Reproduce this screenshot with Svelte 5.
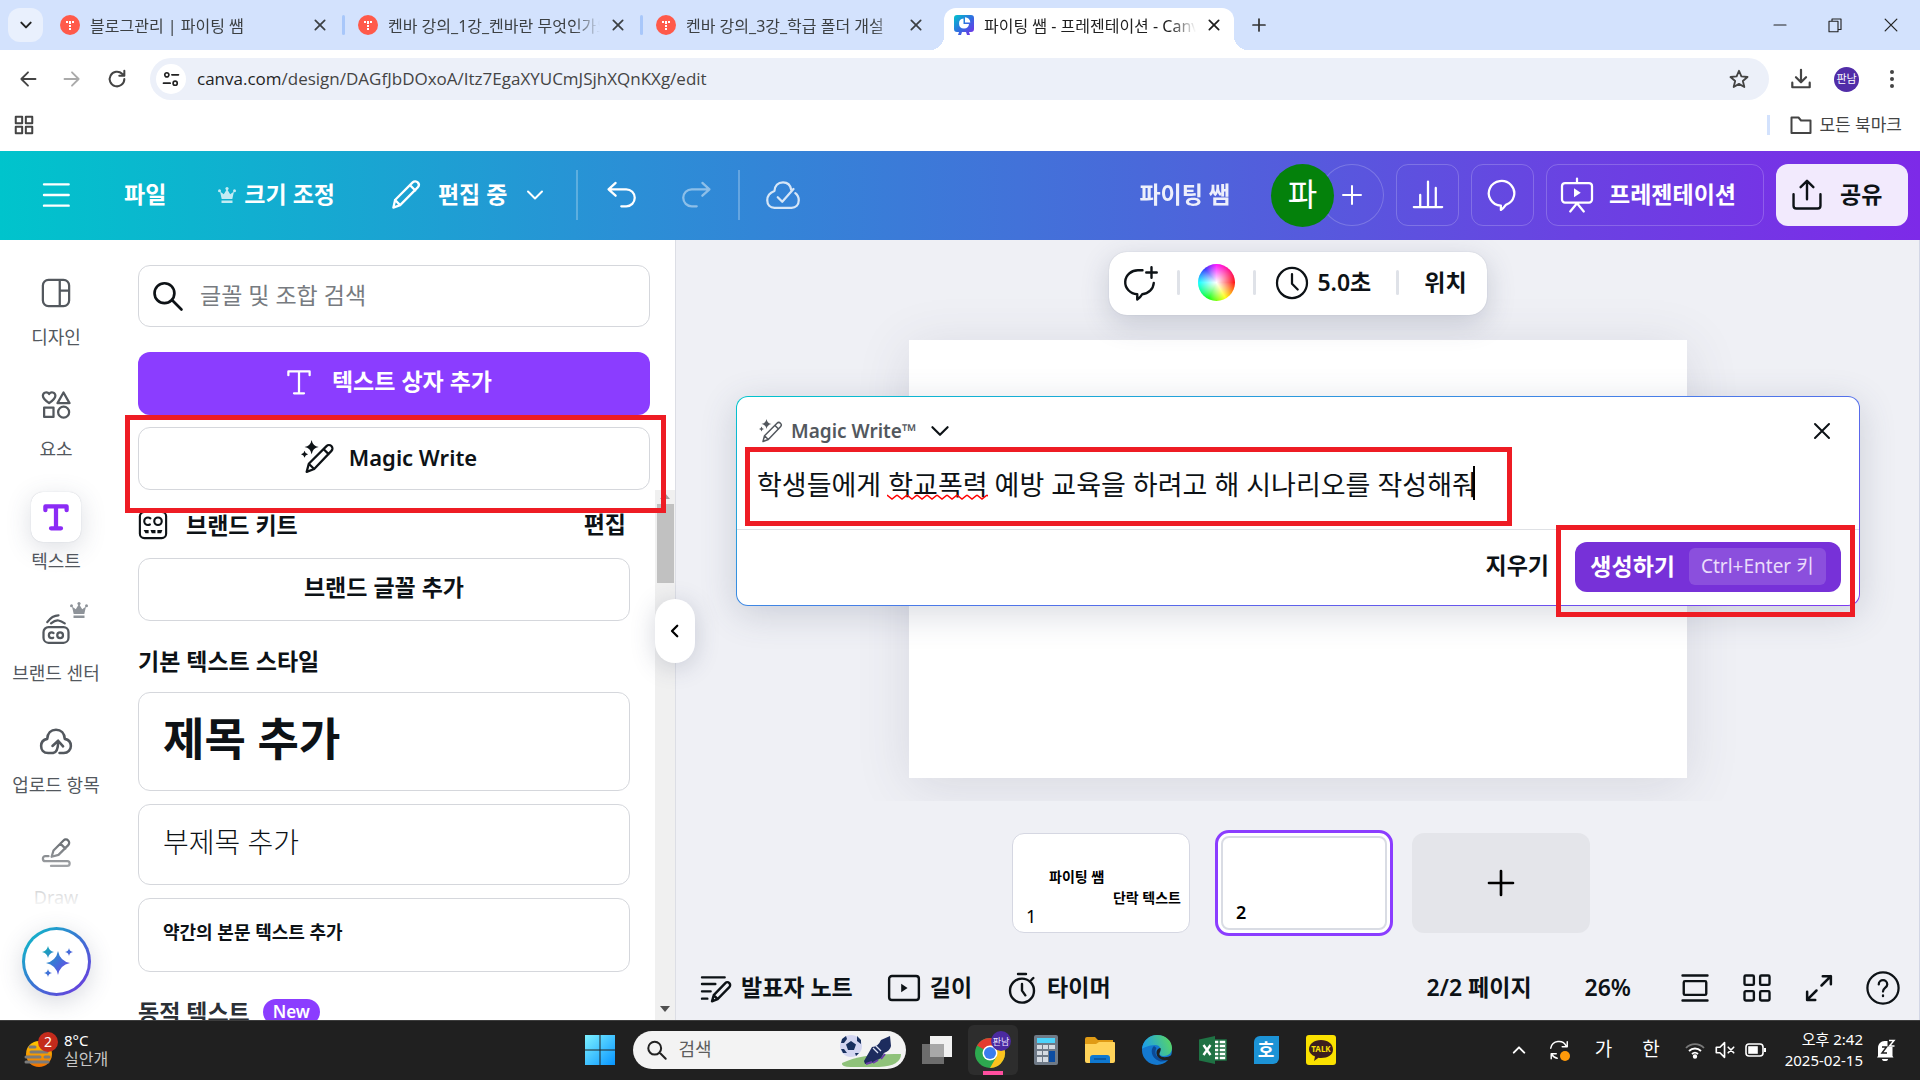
<script lang="ts">
  const tabs = [
    { title: '블로그관리 | 파이팅 쌤', active: false },
    { title: '켄바 강의_1강_켄바란 무엇인가요', active: false },
    { title: '켄바 강의_3강_학급 폴더 개설', active: false },
    { title: '파이팅 쌤 - 프레젠테이션 - Canva', active: true },
  ];

  const rail = [
    { icon: 'design', label: '디자인' },
    { icon: 'elements', label: '요소' },
    { icon: 'text', label: '텍스트', active: true },
    { icon: 'brand', label: '브랜드 센터', crown: true },
    { icon: 'upload', label: '업로드 항목' },
    { icon: 'draw', label: 'Draw' },
  ];

  // stroke icons, 24 x 24
  const paths: Record<string, string> = {
    menu: 'M3 4h18.5M3 12h18.5M3 20h18.5',
    down: 'M5 8.5l7 7 7-7',
    up: 'M5 15.5l7-7 7 7',
    left: 'M15 5l-7 7 7 7',
    close: 'M5 5l14 14M19 5L5 19',
    plus: 'M12 3v18M3 12h18',
    back: 'M21 12H4M12 4l-8 8 8 8',
    forward: 'M3 12h17M12 4l8 8-8 8',
    reload: 'M20 12a8 8 0 1 1-2.4-5.7L20 8.5M20 3v5.5h-5.5',
    site: 'M13 7h8M3 17h8M9.500 7a2.500 2.500 0 1 1-5 0a2.500 2.500 0 1 1 5 0M19.500 17a2.500 2.500 0 1 1-5 0a2.500 2.500 0 1 1 5 0',
    star: 'M12 3l2.600 6.200 6.700.6-5.100 4.400 1.600 6.600L12 17.300l-5.800 3.500 1.600-6.600-5.100-4.400 6.700-.6z',
    download: 'M12 2v13M6.500 10l5.500 5.500 5.500-5.500M2.500 16v5h19v-5',
    apps: 'M3 3h7v7H3zM14 3h7v7h-7zM3 14h7v7H3zM14 14h7v7h-7z',
    folder: 'M2.500 4.500h7l2.500 3h9.500v12.500h-19z',
    minimize: 'M4 12h16',
    restore: 'M4 7h12v14H4zM8 7V4h12v14h-4',
    pencil: 'M2.500 21.500l1.300-5.800L17 2.500c1.300-1.300 3-.8 3.800 0s1.300 2.400 0 3.800L7.600 19.600zM15 4.600l4 4M3.800 15.700l3.800 3.900',
    undo: 'M7.500 3.500L2.500 8l5 4.500M2.500 8H15a6 6 0 0 1 0 12h-3.500',
    redo: 'M16.500 3.500l5 4.500-5 4.500M21.500 8H9a6 6 0 0 0 0 12h3.500',
    cloud: 'M17.500 8.500C17 5.500 15 3.500 12 3.500c-3.500 0-5.500 2.500-5.700 5.800C3.500 10.300 1.500 12.500 1.500 15.500c0 3 2 5 4.800 5h11.400c2.800 0 4.800-2 4.800-5 0-2-1-3.700-2.300-4.700M8.500 13.500l3 3 7.500-8.500',
    chart: 'M2 20.500h20M6.500 20V12M12 20V2.500M17.500 20V7',
    comment: 'M10.500 19.500A9 8.700 0 1 1 14 19c-1 1.500-2 2.700-3.500 3.500z',
    present: 'M12 1v3M4 4h16a2 2 0 0 1 2 2v9a2 2 0 0 1-2 2H4a2 2 0 0 1-2-2V6a2 2 0 0 1 2-2zM12 17.500L7.500 23M12 17.500l4.500 5.500',
    share: 'M12 15V2M7.500 6.500L12 2l4.500 4.500M2.500 11.500v8a2 2 0 0 0 2 2h15a2 2 0 0 0 2-2v-8',
    search: 'M16.500 10a7 7 0 1 1-14 0a7 7 0 1 1 14 0M15 15l6.500 6.500',
    design: 'M6 1.500h12A4.500 4.500 0 0 1 22.500 6v12a4.500 4.500 0 0 1-4.500 4.500H6A4.500 4.500 0 0 1 1.500 18V6A4.500 4.500 0 0 1 6 1.500zM15 2v20M15 10h7',
    elements: 'M6.500 10.500C3 8 1.500 6.500 1.500 4.500a2.700 2.700 0 0 1 5-1.300 2.700 2.700 0 0 1 5 1.300c0 2-1.500 3.500-5 6zM18 2l4.800 8.500h-9.600zM2.500 14H10v7.500H2.500zM22.500 17.700a4.400 4.400 0 1 1-8.800 0a4.400 4.400 0 1 1 8.800 0',
    text: 'M3.500 6.500V3.500h17v3M12 3.500v17.500M8 21h8',
    upload: 'M9.500 20.500H6.500C3 20.500 1.500 18 1.500 15.500c0-2.600 1.800-4.500 4.300-5C6 6.500 8.500 4 12 4s6 2.500 6.200 6.500c2.500.5 4.300 2.400 4.300 5 0 2.700-2 5-5 5h-3M10 20.500c2.500-.5 3.500-3 3.500-8M9.500 15.500l4-3.700 3.500 4',
    draw: 'M8.500 15l1.500-5 8-8a2.600 2.600 0 0 1 3.800 3.700L14 13.500zM15.500 4.500l4 4M6 14.500H3.500a2 2 0 0 0 0 4H21M8 22.300h13a1.900 1.900 0 0 0 0-3.800',
    brand: 'M6 10.500h12a4 4 0 0 1 4 4V19a4 4 0 0 1-4 4H6a4 4 0 0 1-4-4v-4.500a4 4 0 0 1 4-4zM8 7.500c2.500-2 5-2.500 6-2.300s3 1 5 2.300M5 6.500c2.500-3.500 6-5.500 9-5.500',
    kit: 'M5 1.500h14A3.500 3.500 0 0 1 22.500 5v14a3.500 3.500 0 0 1-3.500 3.500H5A3.500 3.500 0 0 1 1.500 19V5A3.500 3.500 0 0 1 5 1.500z',
    magic: 'M4 22.500l1.500-5.700L18 4.300a2.400 2.400 0 0 1 3.500 3.400L9.300 20.500zM16 6.500l3.500 3.500M5.500 16.800l3.800 3.700',
    addComment: 'M13 3.500h-2.500a8.500 8 0 0 0-1 16v3.500c1.500-1 2.500-2 3.300-3.500A8.300 8 0 0 0 20.500 12M19 1.500v7M15.500 5h7',
    clock: 'M22 12a10 10 0 1 1-20 0a10 10 0 1 1 20 0M12 6v6.500l3.800 3.800',
    notes: 'M1.500 4h17M1.500 9h10M1.500 14.500h6.500M1.500 20h4M9 22l1.300-4.700 8.700-9a2 2 0 0 1 3 3l-8.800 9zM10.300 17.300l2.900 3',
    duration: 'M3.500 3.500h17a2 2 0 0 1 2 2v13a2 2 0 0 1-2 2h-17a2 2 0 0 1-2-2v-13a2 2 0 0 1 2-2z',
    timer: 'M21 14a9 9 0 1 1-18 0a9 9 0 1 1 18 0M9 1.500h6M12 9v5l2.500 3.500M19 6l1.500-1.500',
    scrollView: 'M2 2h20M2 22h20M4 6.500h16a1 1 0 0 1 1 1v9a1 1 0 0 1-1 1H4a1 1 0 0 1-1-1v-9a1 1 0 0 1 1-1z',
    gridView: 'M3 2h5.500a1 1 0 0 1 1 1v5.500a1 1 0 0 1-1 1H3a1 1 0 0 1-1-1V3a1 1 0 0 1 1-1zM15.500 2H21a1 1 0 0 1 1 1v5.500a1 1 0 0 1-1 1h-5.500a1 1 0 0 1-1-1V3a1 1 0 0 1 1-1zM3 14.500h5.500a1 1 0 0 1 1 1V21a1 1 0 0 1-1 1H3a1 1 0 0 1-1-1v-5.500a1 1 0 0 1 1-1zM15.500 14.500H21a1 1 0 0 1 1 1V21a1 1 0 0 1-1 1h-5.500a1 1 0 0 1-1-1v-5.500a1 1 0 0 1 1-1z',
    expand: 'M14 10l7.500-7.500M15 2.500h6.500V9M10 14l-7.500 7.500M2.500 15v6.500H9',
    help: 'M23 12a11 11 0 1 1-22 0a11 11 0 1 1 22 0M9 9.500c0-4 6-4 6 0 0 2.300-3 2.200-3 5M12 17.200v.6',
    sync: 'M3 10a9 9 0 0 1 17-2M21 3v5.500h-5.500M10 21a9 9 0 0 1-6-4.500M3.500 21.500V16H9',
    mute: 'M2.500 9h4l5-5v16l-5-5h-4zM15.500 9l6 6M21.500 9l-6 6',
  };

  const sparkle = 'M0-10Q1.500-1.500 10 0Q1.500 1.500 0 10Q-1.500 1.500-10 0Q-1.500-1.500 0-10z';

  let search = $state('');
  let prompt = $state('학생들에게 학교폭력 예방 교육을 하려고 해 시나리오를 작성해줘');
</script>

{#snippet icon(name: string, size: number, weight: number = 1.5)}
  <svg class="icon" width={size} height={size} viewBox="0 0 24 24" stroke-width={weight} aria-hidden="true">
    <path d={paths[name]} />
    {#if name === 'magic'}
      <path class="solid" d={sparkle} transform="translate(7.500 5) scale(.5)" />
      <path class="solid" d={sparkle} transform="translate(2.500 10) scale(.25)" />
    {:else if name === 'present'}
      <path class="solid" d="M10 7.500v6l4.500-3z" />
    {:else if name === 'duration'}
      <path class="solid" d="M10 9v6l4.500-3z" />
    {:else if name === 'brand'}
      <circle cx="8.600" cy="17" r="2.300" stroke-dasharray="9.800 4.600" stroke-dashoffset="-2.300" />
      <circle cx="15.300" cy="17" r="2.300" />
    {:else if name === 'kit'}
      <circle cx="8" cy="9" r="3" stroke-dasharray="12.800 6" stroke-dashoffset="-3" />
      <circle cx="16" cy="9" r="3" />
      <path class="solid" d="M4.500 16h4v2.500H6zM10 16h4v2.500h-3zM15.500 16h4l-1 2.500h-3z" />
    {/if}
  </svg>
{/snippet}

{#snippet crown()}
  <svg class="crown" width="18" height="16" viewBox="0 0 18 16" aria-hidden="true">
    <path d="M2 4.500l3.800 2.700L9 2l3.200 5.200L16 4.500 14.300 12H3.700zM3.500 13.500h11V16h-11z" />
    <circle cx="1.500" cy="3.800" r="1.500" /><circle cx="9" cy="1.600" r="1.600" /><circle cx="16.500" cy="3.800" r="1.500" />
  </svg>
{/snippet}

<div class="window">
  <header class="tabstrip">
    <button class="tab-search" aria-label="탭 검색">{@render icon('down', 16, 3)}</button>
    <div class="tabs">
      {#each tabs as tab (tab.title)}
        <div class="tab" class:active={tab.active}>
          {#if tab.active}
            <svg width="20" height="24" viewBox="0 0 20 24" aria-hidden="true">
              <defs>
                <linearGradient id="fav" x1="0" y1="0" x2="1" y2="1">
                  <stop offset="0" stop-color="#00c4cc" /><stop offset=".5" stop-color="#2f6fe0" /><stop offset="1" stop-color="#7d2ae8" />
                </linearGradient>
              </defs>
              <path fill="url(#fav)" d="M3 2h14a3 3 0 0 1 3 3v11a3 3 0 0 1-3 3h-2l1 3h-3l-1-3H8l-1 3H4l1-3H3a3 3 0 0 1-3-3V5a3 3 0 0 1 3-3z" />
              <path fill="#fff" d="M9.500 5.500a5 5 0 1 0 5.500 5.500h-5.500zM11 4.200v5.300h5.300A5.300 5.300 0 0 0 11 4.200z" />
            </svg>
          {:else}
            <svg width="20" height="20" viewBox="0 0 20 20" aria-hidden="true">
              <circle cx="10" cy="10" r="10" fill="#ff5a4a" />
              <path d="M6 7h8M10 7v8" stroke="#fff" stroke-width="2" stroke-dasharray="2 1" fill="none" />
            </svg>
          {/if}
          <span class="tab-title">{tab.title}</span>
          <button aria-label="탭 닫기">{@render icon('close', 16, 2.6)}</button>
        </div>
      {/each}
    </div>
    <button class="new-tab" aria-label="새 탭">{@render icon('plus', 16, 2.6)}</button>
    <div class="window-controls">
      <button aria-label="최소화">{@render icon('minimize', 18, 1.5)}</button>
      <button aria-label="이전 크기로 복원">{@render icon('restore', 18, 1.5)}</button>
      <button aria-label="닫기">{@render icon('close', 20, 1.5)}</button>
    </div>
  </header>

  <div class="chrome-bar">
    <div class="address-row">
      <div class="nav-buttons">
        <button aria-label="뒤로">{@render icon('back', 20, 2.2)}</button>
        <button class="dim" aria-label="앞으로">{@render icon('forward', 20, 2.2)}</button>
        <button aria-label="새로고침">{@render icon('reload', 22, 2.2)}</button>
      </div>
      <div class="omnibox">
        <button class="site-info" aria-label="사이트 정보">{@render icon('site', 20, 2)}</button>
        <span class="url"><b>canva.com</b>/design/DAGfJbDOxoA/Itz7EgaXYUCmJSjhXQnKXg/edit</span>
        <button aria-label="북마크">{@render icon('star', 22, 2)}</button>
      </div>
      <div class="chrome-actions">
        <button aria-label="다운로드">{@render icon('download', 22, 2.4)}</button>
        <button class="profile">판남</button>
        <button aria-label="메뉴">
          <svg width="6" height="22" viewBox="0 0 6 22" fill="#444"><circle cx="3" cy="4" r="2" /><circle cx="3" cy="11" r="2" /><circle cx="3" cy="18" r="2" /></svg>
        </button>
      </div>
    </div>
    <div class="bookmarks">
      <button aria-label="앱">{@render icon('apps', 22, 2.2)}</button>
      <button class="all-bookmarks">{@render icon('folder', 24, 2)}모든 북마크</button>
    </div>
  </div>

  <header class="canva-header">
    <div class="header-left">
      <button aria-label="메뉴">{@render icon('menu', 32, 1.8)}</button>
      <button>파일</button>
      <button class="resize">{@render crown()}크기 조정</button>
      <button class="editing">{@render icon('pencil', 32, 1.7)}편집 중{@render icon('down', 24, 2)}</button>
      <span class="rule"></span>
      <button class="undo" aria-label="실행 취소">{@render icon('undo', 34, 1.6)}</button>
      <button class="redo" aria-label="다시 실행">{@render icon('redo', 34, 1.6)}</button>
      <span class="rule"></span>
      <button class="saved" aria-label="저장됨">{@render icon('cloud', 36, 1.5)}</button>
    </div>
    <div class="header-right">
      <span class="doc-name">파이팅 쌤</span>
      <div class="people">
        <span class="avatar">파</span>
        <button class="add-person" aria-label="멤버 추가">{@render icon('plus', 24, 2)}</button>
      </div>
      <button class="square" aria-label="분석">{@render icon('chart', 34, 1.6)}</button>
      <button class="square" aria-label="댓글">{@render icon('comment', 34, 1.6)}</button>
      <button class="square present">{@render icon('present', 36, 1.5)}프레젠테이션</button>
      <button class="share">{@render icon('share', 34, 1.7)}공유</button>
    </div>
  </header>

  <main>
    <nav class="rail">
      {#each rail as item (item.label)}
        <a href="#{item.icon}" class:active={item.active}>
          <span class="rail-icon">
            {@render icon(item.icon, item.icon === 'upload' ? 34 : 30, item.active ? 3.4 : 1.8)}
            {#if item.crown}<span class="rail-crown">{@render crown()}</span>{/if}
          </span>
          <span class="rail-label">{item.label}</span>
        </a>
      {/each}
      <div class="rail-fade"></div>
      <button class="assistant" aria-label="Canva 어시스턴트">
        <svg width="36" height="36" viewBox="-18 -18 36 36" fill="url(#spark)" aria-hidden="true">
          <defs>
            <linearGradient id="spark" gradientUnits="userSpaceOnUse" x1="-14" y1="-12" x2="14" y2="12">
              <stop offset="0" stop-color="#16a8b8" /><stop offset=".5" stop-color="#3f73d8" /><stop offset="1" stop-color="#7a3be8" />
            </linearGradient>
          </defs>
          <path d="M1-11Q3-1 13 1Q3 3 1 13Q-1 3-11 1Q-1-1 1-11z" />
          <path d="M-9-16Q-8-11-3-10Q-8-9-9-4Q-10-9-15-10Q-10-11-9-16z" />
          <path d="M12-14Q12.500-10.500 16-10Q12.500-9.500 12-6Q11.500-9.500 8-10Q11.500-10.500 12-14z" />
          <path d="M-9 7Q-8.500 10.500-5 11Q-8.500 11.500-9 15Q-9.500 11.500-13 11Q-9.500 10.500-9 7z" />
        </svg>
      </button>
    </nav>

    <aside class="panel">
      <div class="panel-top">
        <label class="search">
          {@render icon('search', 34, 1.9)}
          <input type="search" placeholder="글꼴 및 조합 검색" aria-label="글꼴 및 조합 검색" bind:value={search} />
        </label>
        <button class="add-text">{@render icon('text', 30, 1.8)}텍스트 상자 추가</button>
        <div class="marked magic-entry">
          <button class="outlined">{@render icon('magic', 34, 1.6)}Magic Write</button>
          <span class="mark"></span>
        </div>
      </div>
      <div class="panel-scroll">
        <div class="list">
          <div class="brand-row">
            {@render icon('kit', 30, 1.7)}
            <h2>브랜드 키트</h2>
            <button>편집</button>
          </div>
          <button class="outlined">브랜드 글꼴 추가</button>
          <h2 class="section">기본 텍스트 스타일</h2>
          <button class="style title">제목 추가</button>
          <button class="style subtitle">부제목 추가</button>
          <button class="style body">약간의 본문 텍스트 추가</button>
          <h2 class="section dynamic">동적 텍스트 <span class="new">New</span></h2>
        </div>
        <div class="scrollbar" aria-hidden="true">
          <svg width="10" height="6" viewBox="0 0 10 6"><path d="M0 6l5-6 5 6z" fill="#a0a0a0" /></svg>
          <span class="thumb"></span>
          <svg width="10" height="6" viewBox="0 0 10 6"><path d="M0 0l5 6 5-6z" fill="#505050" /></svg>
        </div>
      </div>
      <button class="collapse" aria-label="패널 숨기기">{@render icon('left', 18, 3)}</button>
    </aside>

    <section class="editor">
      <div class="stage">
        <div class="toolbar">
          <button aria-label="댓글 추가">{@render icon('addComment', 36, 1.6)}</button>
          <span class="sep"></span>
          <button class="wheel" aria-label="배경 색상"></button>
          <span class="sep"></span>
          <button class="timing">{@render icon('clock', 36, 1.5)}5.0초</button>
          <span class="sep"></span>
          <button class="position">위치</button>
        </div>
        <div class="page"></div>
      </div>

      <div class="thumbs">
        <button class="slide first" aria-label="1페이지">
          <span class="slide-text one">파이팅 쌤</span>
          <span class="slide-text two">단락 텍스트</span>
          <span class="num">1</span>
        </button>
        <button class="slide selected" aria-label="2페이지"><span class="num">2</span></button>
        <button class="add-slide" aria-label="페이지 추가">{@render icon('plus', 32, 2)}</button>
      </div>

      <footer class="status">
        <button>{@render icon('notes', 32, 1.8)}발표자 노트</button>
        <button>{@render icon('duration', 34, 1.7)}길이</button>
        <button>{@render icon('timer', 32, 1.8)}타이머</button>
        <span class="page-count">2/2 페이지</span>
        <button class="zoom">26%</button>
        <div class="view-buttons">
          <button aria-label="스크롤 보기">{@render icon('scrollView', 30, 1.9)}</button>
          <button aria-label="그리드 보기">{@render icon('gridView', 30, 1.9)}</button>
          <button aria-label="전체 화면">{@render icon('expand', 30, 2)}</button>
          <button aria-label="도움말">{@render icon('help', 34, 1.6)}</button>
        </div>
      </footer>

      <form class="magic-write" onsubmit={(e) => e.preventDefault()}>
        <div class="mw-head">
          {@render icon('magic', 24, 1.5)}
          <label for="prompt">Magic Write™</label>
          <button type="button" aria-label="옵션">{@render icon('down', 26, 2)}</button>
          <button type="button" class="mw-close" aria-label="닫기">{@render icon('close', 24, 2)}</button>
        </div>
        <div class="mw-prompt">
          <input id="prompt" type="text" spellcheck="false" bind:value={prompt} />
          <svg class="squiggle" width="101" height="6" aria-hidden="true">
            <defs>
              <pattern id="wave" width="10" height="6" patternUnits="userSpaceOnUse">
                <path d="M0 1L5 5L10 1" fill="none" stroke="#f00" stroke-width="1.400" />
              </pattern>
            </defs>
            <rect width="101" height="6" fill="url(#wave)" />
          </svg>
          <span class="caret"></span>
          <span class="mark"></span>
        </div>
        <div class="mw-foot">
          <button type="button" class="clear">지우기</button>
          <div class="marked submit">
            <button class="generate">생성하기<kbd>Ctrl+Enter 키</kbd></button>
            <span class="mark"></span>
          </div>
        </div>
      </form>
    </section>
  </main>

  <footer class="taskbar">
    <button class="weather">
      <svg width="36" height="36" viewBox="0 0 36 36" aria-hidden="true">
        <defs>
          <linearGradient id="sun" x1="0" y1="0" x2="0" y2="1"><stop offset="0" stop-color="#ffc800" /><stop offset="1" stop-color="#f07000" /></linearGradient>
        </defs>
        <circle cx="15" cy="22" r="13" fill="url(#sun)" />
        <path d="M6 15h5M7 20h16M2 25h14M21 25h4M2 30h22" stroke="#7b7b7b" stroke-width="3" stroke-linecap="round" />
        <circle cx="24" cy="10" r="10" fill="#c42b1c" />
        <text x="24" y="15" fill="#fff" font-size="14" text-anchor="middle">2</text>
      </svg>
      <span>8°C<br /><small>실안개</small></span>
    </button>

    <div class="apps">
      <button aria-label="시작">
        <svg width="30" height="30" viewBox="0 0 30 30">
          <defs>
            <linearGradient id="win" gradientUnits="userSpaceOnUse" x1="0" y1="0" x2="30" y2="30"><stop offset="0" stop-color="#7df1ff" /><stop offset="1" stop-color="#0795ff" /></linearGradient>
          </defs>
          <path fill="url(#win)" d="M0 0h14.500v14.500H0zM15.500 0H30v14.500H15.500zM0 15.500h14.500V30H0zM15.500 15.500H30V30H15.500z" />
        </svg>
      </button>
      <label class="task-search">
        {@render icon('search', 22, 2.2)}
        <input type="text" placeholder="검색" aria-label="검색" />
        <svg width="64" height="34" viewBox="0 0 64 34" aria-hidden="true">
          <path d="M3 30Q24 20 62 21Q62 33 40 34H12Q2 34 3 30z" fill="#8fc27a" />
          <circle cx="12" cy="13" r="11" fill="#d3d6f1" />
          <path d="M12 8l5 3.500-2 5.500H9l-2-5.500zM3 6l4-3 1 3-3 4-3 0zM18 3l4 4v4l-4-3zM4 20l-2-4 3 0 3 4zM16 20h4l-3 3z" fill="#18305f" />
          <path d="M51 3l1 10q-1 5-7 7l-3 5-9 5-7 1-1-3 8-14q6 0 9-7z" fill="#1d2c5e" />
          <path d="M36 12l6 6M34 15l5 5" stroke="#dfe4f5" stroke-width="1.300" />
          <path d="M27 31l6-2M34 30l5-3M42 26l4-5" stroke="#6a3fa8" stroke-width="2" />
        </svg>
      </label>
      <button aria-label="작업 보기">
        <svg width="30" height="32" viewBox="0 0 30 32"><path fill="#6d6d6d" d="M0 10h22v20H0z" /><path fill="#f1f1f1" d="M8 2h22v21H8z" /><path fill="#a8a8a8" d="M8 10h14v13H8z" /></svg>
      </button>
      <button class="running" aria-label="Chrome">
        <svg width="38" height="40" viewBox="0 0 38 40">
          <circle cx="16" cy="23" r="15" fill="#2da94f" />
          <path d="M16 23L3 15.500A15 15 0 0 1 29 15.500z" fill="#e33b2e" />
          <path d="M16 15.500h13A15 15 0 0 1 16 38l6.500-11.300z" fill="#fcc31e" />
          <circle cx="16" cy="23" r="7.500" fill="#fff" /><circle cx="16" cy="23" r="6" fill="#3b7ded" />
          <circle cx="27" cy="11" r="10" fill="#4b2aa0" />
          <text x="27" y="15" fill="#e8e2ff" font-size="9" text-anchor="middle">판남</text>
        </svg>
      </button>
      <button aria-label="계산기">
        <svg width="24" height="30" viewBox="0 0 24 30">
          <rect width="24" height="30" rx="2" fill="#6f7a87" /><path fill="#4cd3fb" d="M3 3h18v5H3z" />
          <path fill="#d5dbe2" d="M3 10h5v4H3zM9 10h5v4H9zM15 10h6v4h-6zM3 16h5v4H3zM9 16h5v4H9zM3 22h5v5H3zM9 22h5v5H9z" /><path fill="#0c4da2" d="M15 16h6v11h-6z" />
        </svg>
      </button>
      <button aria-label="파일 탐색기">
        <svg width="30" height="28" viewBox="0 0 30 28">
          <path fill="#e09b15" d="M0 3a2 2 0 0 1 2-2h8l3 3h15v8H0z" /><path fill="#ffd35a" d="M0 8l11 0 3-2h15a1 1 0 0 1 1 1v18a2 2 0 0 1-2 2H2a2 2 0 0 1-2-2z" />
          <path fill="#0f78d0" d="M5 27v-5a3 3 0 0 1 3-3h14a3 3 0 0 1 3 3v5z" /><path stroke="#0a4f94" stroke-width="1.500" d="M9 23h12" />
        </svg>
      </button>
      <button aria-label="Edge">
        <svg width="30" height="30" viewBox="0 0 30 30">
          <defs>
            <linearGradient id="edge" x1="0" y1=".3" x2="1" y2="0"><stop offset="0" stop-color="#1d9fe8" /><stop offset="1" stop-color="#5fdc57" /></linearGradient>
          </defs>
          <circle cx="15" cy="15" r="15" fill="#1479d0" />
          <path fill="url(#edge)" d="M0 14C1 5 8 0 15 0c9 0 15 6 15 13 0 5-4 8-8 8-4 0-5-2-4-4s1-7-5-7C7 10 1 13 0 14z" />
          <path fill="#0c4a96" d="M12 11c-4 3-3 12 5 15 4 1.500 8-.5 10-3C22 26 14 23 13.500 18c-.3-3 1-5 1-5z" />
          <path fill="#202020" d="M18.500 13c1 3-2 5-1 7 2 3 8 3 12 0l.5 4-3 1C20 26 14 23 14.500 17c.2-2 2-4 4-4z" />
        </svg>
      </button>
      <button aria-label="Excel">
        <svg width="28" height="28" viewBox="0 0 28 28">
          <path fill="#fff" stroke="#1f7244" stroke-width="1.500" d="M15 4h12v20H15z" /><path stroke="#1f7244" stroke-width="1.500" d="M16 8h10M16 12h10M16 16h10M16 20h10M20 4v20" />
          <path fill="#1f7244" d="M0 3.500L16 0v28L0 24.500z" /><path d="M4.500 9l7 10M11.500 9l-7 10" stroke="#fff" stroke-width="2.400" />
        </svg>
      </button>
      <button aria-label="한글">
        <svg width="25" height="28" viewBox="0 0 25 28">
          <path fill="#1c93d6" d="M6 0h19v22a6 6 0 0 1-6 6H0V6a6 6 0 0 1 6-6z" /><text x="12" y="21" fill="#fff" font-size="18" font-weight="700" text-anchor="middle">호</text>
        </svg>
      </button>
      <button aria-label="카카오톡">
        <svg width="30" height="30" viewBox="0 0 30 30">
          <rect width="30" height="30" rx="3" fill="#fae100" /><path fill="#3c1e1e" d="M15 5c7 0 12 4 12 9.500S22 23 15 23c-1 0-2 0-2.500-.2L8 26l1-4.500C5.500 20 3 17.500 3 14.500 3 9 8 5 15 5z" />
          <text x="15" y="17" fill="#fae100" font-size="8" font-weight="700" text-anchor="middle">TALK</text>
        </svg>
      </button>
    </div>

    <div class="tray">
      <button aria-label="숨겨진 아이콘">{@render icon('up', 18, 2.6)}</button>
      <button class="sync" aria-label="업데이트">{@render icon('sync', 22, 1.6)}<span class="dot"></span></button>
      <button class="ime">가</button>
      <button class="ime">한</button>
      <button class="quick" aria-label="네트워크, 소리, 배터리">
        <svg width="20" height="18" viewBox="0 0 20 18" fill="none" stroke="#fff" stroke-width="1.800">
          <path d="M1 7a12.500 12.500 0 0 1 18 0" opacity=".4" /><path d="M4 10a8.500 8.500 0 0 1 12 0M7 13a4.500 4.500 0 0 1 6 0" /><circle cx="10" cy="15.500" r="1.300" fill="#fff" />
        </svg>
        {@render icon('mute', 22, 1.8)}
        <svg width="22" height="16" viewBox="0 0 22 16" fill="none" stroke="#fff" stroke-width="1.600">
          <rect x="1" y="2" width="17" height="12" rx="3" /><rect x="4" y="5" width="8" height="6" fill="#fff" /><path d="M20 6v4" stroke-width="2" />
        </svg>
      </button>
      <button class="clock">오후 2:42<br />2025-02-15</button>
      <svg width="20" height="22" viewBox="0 0 20 22" aria-label="알림">
        <path fill="#fff" d="M2 17V9c0-4 3-7 6.500-7h3v5h5v10l1 1.500H1zM6 20h6a3 2 0 0 1-6 0z" />
        <path d="M6 8h4.500L6 14h5M12.500 1.500h5L13 7h5" fill="none" stroke="#202020" stroke-width="1.500" /><path d="M13 1.500h5L13.500 7h5" fill="none" stroke="#fff" stroke-width="1.500" />
      </svg>
    </div>
  </footer>
</div>

<style>
  :global(body) {
    overflow: hidden;
  }

  .window {
    display: flex;
    flex-direction: column;
    height: 100vh;
    font-family: 'Noto Sans', 'Noto Sans CJK KR', sans-serif;
    line-height: 1.3;
    color: #0d1216;
    background: #fff;
  }

  .window * {
    box-sizing: border-box;
  }

  button {
    display: flex;
    align-items: center;
    justify-content: center;
    flex: none;
    padding: 0;
    border: 0;
    background: none;
    color: inherit;
    font: inherit;
    white-space: nowrap;
    cursor: pointer;
  }

  svg {
    display: block;
    flex: none;
  }

  input {
    min-width: 0;
    flex: 1;
    padding: 0;
    border: 0;
    outline: 0;
    background: none;
    color: inherit;
    font: inherit;
  }

  h2 {
    margin: 0;
    font-size: 23px;
    font-weight: 600;
    line-height: 30px;
  }

  .icon {
    fill: none;
    stroke: currentColor;
    stroke-linecap: round;
    stroke-linejoin: round;
  }

  .icon .solid {
    fill: currentColor;
    stroke: none;
  }

  .crown {
    fill: currentColor;
  }

  .marked {
    position: relative;
  }

  .mark {
    position: absolute;
    border: 5px solid #ee1c24;
    pointer-events: none;
    z-index: 5;
  }

  /* browser */
  .tabstrip {
    display: flex;
    align-items: flex-end;
    height: 50px;
    flex: none;
    padding-left: 8px;
    background: #d3e2fd;
    color: #222;
    font-size: 16px;
  }

  .tab-search {
    align-self: center;
    width: 35px;
    height: 34px;
    margin-right: 7px;
    border-radius: 12px;
    background: #e9f0fd;
  }

  .tabs {
    display: flex;
    gap: 8px;
  }

  .tab {
    position: relative;
    display: flex;
    align-items: center;
    gap: 10px;
    width: 290px;
    height: 42px;
    padding: 0 12px 8px 10px;
    color: #3c4043;
  }

  .tab:not(.active):not(:nth-child(3))::after {
    content: '';
    position: absolute;
    right: -5px;
    top: 7px;
    width: 3px;
    height: 20px;
    border-radius: 2px;
    background: #a8c7fa;
  }

  .tab.active {
    border-radius: 12px 12px 0 0;
    background: #fff;
    color: #1f1f1f;
  }

  .tab.active::before,
  .tab.active::after {
    content: '';
    position: absolute;
    bottom: 0;
    width: 14px;
    height: 14px;
  }

  .tab.active::before {
    right: 100%;
    background: radial-gradient(circle at 0 0, transparent 14px, #fff 14px);
  }

  .tab.active::after {
    left: 100%;
    background: radial-gradient(circle at 100% 0, transparent 14px, #fff 14px);
  }

  .tab-title {
    flex: 1;
    overflow: hidden;
    padding-top: 2px;
    line-height: 26px;
    white-space: nowrap;
    mask-image: linear-gradient(to right, #000 88%, transparent);
  }

  .new-tab {
    height: 50px;
    margin-left: 17px;
    color: #333;
  }

  .window-controls {
    display: flex;
    align-items: center;
    gap: 37px;
    height: 50px;
    margin-left: auto;
    padding-right: 19px;
  }

  .chrome-bar {
    flex: none;
    height: 101px;
    color: #444;
    background: #fff;
  }

  .address-row {
    display: flex;
    align-items: center;
    height: 58px;
    padding: 0 25px 0 18px;
  }

  .nav-buttons {
    display: flex;
    align-items: center;
    gap: 24px;
    width: 132px;
  }

  .nav-buttons .dim {
    opacity: 0.45;
  }

  .omnibox {
    display: flex;
    align-items: center;
    flex: 1;
    height: 42px;
    padding: 0 19px 0 6px;
    border-radius: 21px;
    background: #ecf0f9;
  }

  .site-info {
    width: 30px;
    height: 30px;
    border-radius: 50%;
    background: #fff;
    color: #222;
  }

  .url {
    flex: 1;
    margin-left: 11px;
    font-family: 'Open Sans', 'Noto Sans', sans-serif;
    font-size: 17px;
    line-height: 26px;
  }

  .url b {
    color: #1f1f1f;
    font-weight: 400;
  }

  .chrome-actions {
    display: flex;
    align-items: center;
    gap: 22px;
    margin-left: 21px;
  }

  .profile {
    width: 25px;
    height: 25px;
    margin-right: 8px;
    border-radius: 50%;
    background: #512da8;
    color: #fff;
    font-size: 11px;
  }

  .bookmarks {
    display: flex;
    align-items: center;
    justify-content: space-between;
    height: 34px;
    padding: 0 18px 0 13px;
    font-size: 17px;
  }

  .all-bookmarks {
    gap: 6px;
    padding-left: 19px;
    height: 20px;
    border-left: 3px solid #d3e2fd;
  }

  /* editor header */
  .canva-header {
    display: flex;
    align-items: center;
    justify-content: space-between;
    flex: none;
    height: 89px;
    padding: 0 12px 1px 14px;
    background: linear-gradient(90deg, #00c4cc, #2b8fd6 33%, #4a68da 60%, #6a42e2 82%, #7d2ae8);
    color: #fff;
    font-size: 23px;
    font-weight: 600;
  }

  .header-left,
  .header-right {
    display: flex;
    align-items: center;
  }

  .header-left button {
    padding: 0 26px;
  }

  .header-left .resize {
    gap: 8px;
    margin-right: 3px;
  }

  .resize .crown {
    opacity: 0.75;
  }

  .header-left .editing {
    gap: 16px;
  }

  .rule {
    width: 2px;
    height: 50px;
    margin: 0 3px;
    background: rgba(255, 255, 255, 0.25);
  }

  .header-left .undo {
    padding-left: 24px;
  }

  .header-left .redo {
    padding: 0 22px 0 14px;
    opacity: 0.45;
  }

  .header-left .saved {
    padding-left: 22px;
    opacity: 0.8;
  }

  .header-right {
    gap: 12px;
  }

  .doc-name {
    margin-right: 29px;
    opacity: 0.9;
  }

  .people {
    display: flex;
  }

  .avatar {
    z-index: 1;
    width: 63px;
    height: 63px;
    border-radius: 50%;
    background: #04810b;
    font-size: 32px;
    font-weight: 400;
    line-height: 60px;
    text-align: center;
  }

  .add-person {
    width: 64px;
    height: 62px;
    margin-left: -14px;
    border: 1px solid rgba(255, 255, 255, 0.2);
    border-radius: 50%;
  }

  .square {
    width: 63px;
    height: 62px;
    border: 1px solid rgba(255, 255, 255, 0.2);
    border-radius: 12px;
  }

  .present {
    justify-content: flex-start;
    gap: 14px;
    width: 218px;
    padding-left: 12px;
  }

  .share {
    justify-content: flex-start;
    gap: 16px;
    width: 132px;
    height: 62px;
    padding-left: 14px;
    border-radius: 12px;
    background: #f2eafd;
    color: #0d1216;
  }

  main {
    display: flex;
    flex: 1;
    min-height: 0;
  }

  /* side rail */
  .rail {
    position: relative;
    display: flex;
    flex-direction: column;
    gap: 28px;
    width: 112px;
    flex: none;
    padding-top: 28px;
    overflow: hidden;
    color: #53585e;
  }

  .rail a {
    display: flex;
    flex-direction: column;
    align-items: center;
    gap: 4px;
    color: inherit;
    text-decoration: none;
  }

  .rail-icon {
    position: relative;
    display: flex;
    align-items: center;
    justify-content: center;
    width: 50px;
    height: 50px;
    border-radius: 12px;
  }

  .rail .active .rail-icon {
    color: #8b2bf5;
    box-shadow: 0 0 1px rgba(60, 70, 100, 0.3), 0 6px 26px rgba(60, 70, 100, 0.18);
  }

  .rail-label {
    font-size: 18px;
    line-height: 30px;
    white-space: nowrap;
  }

  .rail-crown {
    position: absolute;
    top: -2px;
    right: -7px;
    color: #8e9399;
  }

  .rail-fade {
    position: absolute;
    right: 0;
    bottom: 0;
    left: 0;
    height: 190px;
    background: linear-gradient(transparent, #fff 42%);
  }

  .assistant {
    position: absolute;
    bottom: 24px;
    left: 22px;
    width: 69px;
    height: 69px;
    border: 3px solid transparent;
    border-radius: 50%;
    background: linear-gradient(#fff, #fff) padding-box, linear-gradient(135deg, #12b5c9 10%, #3b74d3 50%, #7433e0) border-box;
    box-shadow: 0 6px 24px rgba(60, 70, 100, 0.2);
  }

  /* text panel */
  .panel {
    position: relative;
    display: flex;
    flex-direction: column;
    width: 564px;
    flex: none;
    border-right: 1px solid #dcdee5;
    font-size: 23px;
    font-weight: 600;
    z-index: 1;
  }

  .panel-top {
    display: flex;
    flex-direction: column;
    padding: 25px 25px 0 26px;
  }

  .search {
    display: flex;
    align-items: center;
    gap: 15px;
    height: 62px;
    padding: 0 12px;
    border: 1px solid #d5d7dc;
    border-radius: 12px;
    font-weight: 400;
  }

  .search input::placeholder {
    color: #777b80;
    opacity: 1;
  }

  .add-text {
    gap: 18px;
    height: 63px;
    margin: 25px 0 12px;
    padding: 0 12px 3px 0;
    border-radius: 12px;
    background: #8b3dff;
    color: #fff;
  }

  .outlined {
    gap: 14px;
    width: 100%;
    height: 63px;
    padding-bottom: 3px;
    border: 1px solid #d5d7dc;
    border-radius: 12px;
    background: #fff;
  }

  .magic-entry .outlined {
    padding-right: 10px;
    font-size: 22px;
  }

  .magic-entry .mark {
    inset: -12px -16px -23px -13px;
  }

  .panel-scroll {
    display: flex;
    flex: 1;
    min-height: 0;
    overflow: hidden;
  }

  .list {
    display: flex;
    flex-direction: column;
    flex: 1;
    padding: 17px 25px 0 26px;
  }

  .brand-row {
    display: flex;
    align-items: center;
    gap: 18px;
    height: 36px;
    flex: none;
    margin-bottom: 15px;
  }

  .brand-row button {
    margin-left: auto;
    margin-right: 4px;
  }

  .section {
    flex: none;
    margin: 25px 0 16px;
  }

  .style {
    justify-content: flex-start;
    height: 99px;
    margin-bottom: 13px;
    padding: 0 0 4px 24px;
    border: 1px solid #d5d7dc;
    border-radius: 12px;
  }

  .style.title {
    font-size: 45px;
    font-weight: 700;
  }

  .style.subtitle {
    height: 81px;
    font-size: 28px;
    font-weight: 300;
  }

  .style.body {
    height: 74px;
    font-size: 18px;
    font-weight: 700;
  }

  .section.dynamic {
    display: flex;
    align-items: center;
    gap: 13px;
    margin: 12px 0 0;
    color: #2b3036;
  }

  .new {
    padding: 0 10px;
    border-radius: 13px;
    background: #8b3dff;
    color: #fff;
    font-size: 17px;
    line-height: 26px;
  }

  .scrollbar {
    display: flex;
    flex-direction: column;
    align-items: center;
    width: 20px;
    padding: 3px 0 8px;
    background: #f0f0f0;
  }

  .scrollbar .thumb {
    width: 17px;
    height: 79px;
    margin: 5px 0 auto;
    background: #c1c1c1;
  }

  .collapse {
    position: absolute;
    top: 359px;
    right: -20px;
    width: 40px;
    height: 64px;
    border-radius: 20px;
    background: #fff;
    color: #000;
    box-shadow: 0 4px 24px rgba(60, 70, 100, 0.22);
  }

  /* canvas */
  .editor {
    position: relative;
    display: flex;
    flex-direction: column;
    flex: 1;
    min-width: 0;
    background: #eff0f5;
    box-shadow: inset -1px 0 #d3d7e6;
    font-size: 23px;
    font-weight: 600;
  }

  .stage {
    display: flex;
    flex-direction: column;
    align-items: center;
    gap: 25px;
    height: 561px;
    flex: none;
    padding-top: 12px;
    overflow: hidden;
  }

  .toolbar {
    z-index: 1;
    display: flex;
    align-items: center;
    gap: 18px;
    height: 63px;
    padding: 0 20px 2px 14px;
    border-radius: 18px;
    background: #fff;
    box-shadow: 0 0 1px rgba(60, 70, 100, 0.3), 0 8px 28px rgba(60, 70, 100, 0.22);
  }

  .sep {
    width: 3px;
    height: 25px;
    border-radius: 2px;
    background: #dfe2e8;
  }

  .wheel {
    width: 37px;
    height: 37px;
    border-radius: 50%;
    background:
      radial-gradient(circle, #fff, rgba(255, 255, 255, 0) 75%),
      conic-gradient(#f0f, #f00 90deg, #ff0 150deg, #0f0 205deg, #0ff 270deg, #22f 320deg, #f0f);
  }

  .timing {
    gap: 7px;
    margin-right: 7px;
  }

  .position {
    margin-left: 7px;
  }

  .page {
    width: 63%;
    max-width: 778px;
    aspect-ratio: 16 / 9;
    background: #fff;
    box-shadow: 0 8px 50px rgba(60, 60, 90, 0.13);
  }

  .thumbs {
    display: flex;
    align-items: center;
    justify-content: center;
    gap: 22px;
    margin-top: 32px;
    padding-left: 6px;
    color: #000;
    font-size: 18px;
  }

  .slide {
    position: relative;
    width: 178px;
    height: 100px;
    border: 1px solid #d5d7e2;
    border-radius: 12px;
    background: #fff;
  }

  .slide.selected {
    width: 166px;
    height: 94px;
    margin: 0 3px 0 9px;
    border: 2px solid #d9dce4;
    border-radius: 8px;
    box-shadow: 0 0 0 3px #fff;
    outline: 3px solid #8b3dff;
    outline-offset: 3px;
  }

  .num {
    position: absolute;
    bottom: 4px;
    left: 13px;
    font-weight: 600;
    line-height: 24px;
  }

  .first .num {
    font-weight: 400;
  }

  .slide-text {
    position: absolute;
    font-size: 14px;
    font-weight: 700;
    line-height: 20px;
  }

  .slide-text.one {
    top: 33px;
    left: 36px;
  }

  .slide-text.two {
    top: 54px;
    right: 8px;
  }

  .add-slide {
    width: 178px;
    height: 100px;
    border-radius: 12px;
    background: #e4e5ea;
  }

  .status {
    display: flex;
    align-items: center;
    gap: 34px;
    height: 64px;
    margin-top: auto;
    padding: 0 20px 0 24px;
  }

  .status > button {
    gap: 9px;
  }

  .page-count {
    margin-left: auto;
    margin-right: 19px;
  }

  .zoom {
    margin-right: 15px;
  }

  .view-buttons {
    display: flex;
    align-items: center;
    gap: 32px;
  }

  /* magic write prompt */
  .magic-write {
    position: absolute;
    top: 156px;
    right: 60px;
    left: 60px;
    z-index: 2;
    border: 1px solid transparent;
    border-radius: 12px;
    background: linear-gradient(#fff, #fff) padding-box, linear-gradient(165deg, #00c4cc, #4a7be8 50%, #7d3af0) border-box;
    box-shadow: 0 8px 36px rgba(60, 70, 100, 0.2);
  }

  .mw-head {
    display: flex;
    align-items: center;
    gap: 8px;
    height: 50px;
    padding: 18px 25px 0 22px;
    color: #53585e;
    font-size: 19px;
  }

  .mw-head button {
    margin-left: 2px;
    color: #0d1216;
  }

  .mw-head .mw-close {
    margin-left: auto;
  }

  .mw-prompt {
    position: relative;
    display: flex;
    height: 83px;
    padding: 0 20px;
    border-bottom: 1px solid #dfe1e5;
    font-size: 27px;
    font-weight: 400;
  }

  .mw-prompt input {
    height: 72px;
  }

  .squiggle {
    position: absolute;
    top: 47px;
    left: 150px;
  }

  .caret {
    position: absolute;
    top: 19px;
    left: 736px;
    width: 2px;
    height: 34px;
    background: #000;
  }

  .mw-prompt .mark {
    top: 0;
    bottom: 3px;
    left: 8px;
    width: 767px;
  }

  .mw-foot {
    display: flex;
    align-items: center;
    justify-content: flex-end;
    gap: 26px;
    height: 75px;
    padding: 0 18px 2px 0;
  }

  .clear {
    padding-bottom: 2px;
  }

  .generate {
    gap: 14px;
    width: 266px;
    height: 50px;
    border-radius: 12px;
    background: #7731d8;
    color: #fff;
  }

  kbd {
    padding: 0 12px;
    border-radius: 6px;
    background: rgba(255, 255, 255, 0.15);
    color: #eadcfb;
    font-family: inherit;
    font-size: 19px;
    font-weight: 400;
    line-height: 37px;
  }

  .submit .mark {
    inset: -17px -14px -25px -19px;
  }

  /* taskbar */
  .taskbar {
    display: grid;
    grid-template-columns: 1fr auto 1fr;
    align-items: center;
    flex: none;
    height: 60px;
    padding: 0 24px 2px;
    border-top: 1px solid #3d3d3d;
    background: #202020;
    color: #fff;
    font-size: 15px;
    line-height: 19px;
  }

  .weather {
    justify-self: start;
    gap: 4px;
    text-align: left;
  }

  .weather small {
    color: #c8c8c8;
    font-size: 16px;
  }

  .apps {
    display: flex;
    align-items: center;
    gap: 27px;
  }

  .task-search {
    display: flex;
    align-items: center;
    gap: 11px;
    width: 273px;
    height: 38px;
    margin: 0 -11px 0 -9px;
    padding: 0 3px 0 13px;
    border-radius: 19px;
    background: #f3f3f3;
    color: #222;
    font-size: 18px;
  }

  .task-search input::placeholder {
    color: #5d5d5d;
    opacity: 1;
  }

  .running {
    width: 50px;
    height: 50px;
    margin: 0 -11px;
    border-radius: 6px;
    background: linear-gradient(#ff4fa0, #ff4fa0) center 46px / 20px 4px no-repeat #2d2d2d;
  }

  .tray {
    display: flex;
    align-items: center;
    gap: 20px;
    justify-self: end;
  }

  .tray .ime {
    padding: 0 5px;
    font-size: 19px;
  }

  .tray .quick {
    gap: 9px;
    margin-right: -2px;
  }

  .sync {
    position: relative;
  }

  .dot {
    position: absolute;
    right: 0;
    bottom: 0;
    width: 10px;
    height: 10px;
    border-radius: 50%;
    background: #ff9a0a;
  }

  .tray .clock {
    margin-right: -7px;
    font-size: 15px;
    line-height: 21px;
    text-align: right;
  }
</style>
